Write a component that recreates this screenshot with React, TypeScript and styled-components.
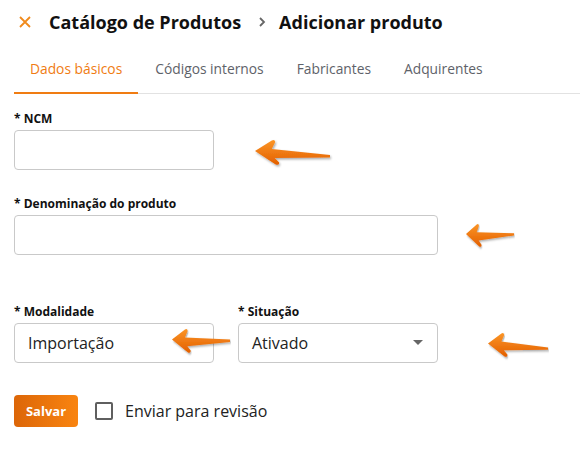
import * as React from 'react'
import styled, {createGlobalStyle} from 'styled-components'

const Global = createGlobalStyle`
  body {
    margin: 0;
    background: #fff;
    font-family: 'Open Sans', 'Noto Sans', sans-serif;
    color: #1a1a1a;
  }
`

const Page = styled.div`
  position: relative;
  width: 580px;
  height: 471px;
  overflow: hidden;
`

const Header = styled.header`
  display: flex;
  align-items: center;
  height: 44px;
  padding: 0 0 0 17px;
`

const Close = styled.span`
  width: 16px;
  height: 16px;
  display: flex;
  margin-right: 16px;
`

const Title = styled.h1`
  margin: 0;
  font-size: 18px;
  font-weight: 700;
  color: #111;
`

const Crumb = styled.span`
  display: flex;
  margin: 0 13px 0 17px;
`

const Tabs = styled.nav`
  display: flex;
  gap: 1px;
  margin-left: 14px;
  border-bottom: 1px solid #e2e2e2;
  height: 49px;
`

const Tab = styled.div<{$active?: boolean}>`
  display: flex;
  align-items: center;
  padding: 0 16px;
  font-size: 13.8px;
  color: ${p => (p.$active ? '#f07c12' : '#5e6269')};
  border-bottom: 2px solid ${p => (p.$active ? '#f07c12' : 'transparent')};
  margin-bottom: -1px;
`

const Form = styled.div`
  padding: 16px 14px 0;
  display: flex;
  flex-direction: column;
`

const Field = styled.div<{$width: number; $mt?: number}>`
  display: flex;
  flex-direction: column;
  width: ${p => p.$width}px;
  margin-top: ${p => p.$mt || 0}px;
`

const Label = styled.label`
  font-size: 12px;
  font-weight: 700;
  color: #111;
  height: 20px;
  line-height: 18px;
`

const Input = styled.div`
  box-sizing: border-box;
  height: 40px;
  border: 1px solid #c9c9c9;
  border-radius: 4px;
  display: flex;
  align-items: center;
  justify-content: space-between;
  padding: 0 14px 0 13px;
  font-size: 16px;
  color: #222;
`

const Row = styled.div<{$mt: number}>`
  display: flex;
  gap: 24px;
  margin-top: ${p => p.$mt}px;
`

const Actions = styled.div`
  display: flex;
  align-items: center;
  margin-top: 32px;
  gap: 17px;
`

const Save = styled.button`
  width: 64px;
  height: 32px;
  border: none;
  border-radius: 4px;
  background: linear-gradient(90deg, #dc6608, #f98410);
  color: #fff;
  font-family: inherit;
  font-size: 13px;
  font-weight: 700;
`

const Check = styled.label`
  display: flex;
  align-items: center;
  gap: 12px;
  font-size: 16px;
  color: #222;
`

const Box = styled.span`
  box-sizing: border-box;
  width: 18px;
  height: 18px;
  border: 2px solid #5f5f5f;
  border-radius: 2px;
`

const Arrow = styled.svg<{$x: number; $y: number}>`
  position: absolute;
  left: ${p => p.$x}px;
  top: ${p => p.$y}px;
  overflow: visible;
`

const Pointer: React.FC<{x: number; y: number; w: number; h: number; tilt: number}> = ({x, y, w, h, tilt}) => {
  const id = `g${x}${y}`
  return (
    <Arrow $x={x} $y={y} width={w} height={h} viewBox="0 0 76 26" preserveAspectRatio="none">
      <defs>
        <linearGradient id={id} x1="0" y1="0" x2="0" y2="1">
          <stop offset="0" stopColor="#fb9526" />
          <stop offset="1" stopColor="#e35f00" />
        </linearGradient>
        <filter id={id + 's'} x="-20%" y="-30%" width="140%" height="170%">
          <feDropShadow dx="1" dy="1.5" stdDeviation="1" floodColor="#000" floodOpacity="0.35" />
        </filter>
      </defs>
      <path
        d={`M0 12 L17 1.5 Q20 0 20.5 3 L17 10 L76 ${15 + tilt} L76 ${17.5 + tilt} L20 19 L24.5 23.5 Q25 26.5 21 25.5 Z`}
        fill={`url(#${id})`}
        filter={`url(#${id}s)`}
      />
    </Arrow>
  )
}

export default function App() {
  return (
    <Page>
      <Global />
      <Header>
        <Close>
          <svg width="16" height="16" viewBox="0 0 16 16">
            <path d="M3 3 L13 13 M13 3 L3 13" stroke="#f08a1c" strokeWidth="1.8" />
          </svg>
        </Close>
        <Title>Catálogo de Produtos</Title>
        <Crumb>
          <svg width="8" height="12" viewBox="0 0 8 12">
            <path d="M2 2 L6 6 L2 10" stroke="#666" strokeWidth="1.8" fill="none" />
          </svg>
        </Crumb>
        <Title>Adicionar produto</Title>
      </Header>
      <Tabs>
        <Tab $active>Dados básicos</Tab>
        <Tab>Códigos internos</Tab>
        <Tab>Fabricantes</Tab>
        <Tab>Adquirentes</Tab>
      </Tabs>
      <Form>
        <Field $width={200}>
          <Label>* NCM</Label>
          <Input />
        </Field>
        <Field $width={424} $mt={25}>
          <Label>* Denominação do produto</Label>
          <Input />
        </Field>
        <Row $mt={48}>
          <Field $width={200}>
            <Label>* Modalidade</Label>
            <Input>Importação</Input>
          </Field>
          <Field $width={200}>
            <Label>* Situação</Label>
            <Input>
              Ativado
              <svg width="10" height="6" viewBox="0 0 10 6">
                <path d="M0 0 L10 0 L5 5 Z" fill="#666" />
              </svg>
            </Input>
          </Field>
        </Row>
        <Actions>
          <Save>Salvar</Save>
          <Check>
            <Box />
            Enviar para revisão
          </Check>
        </Actions>
      </Form>
      <Pointer x={255} y={139} w={75} h={26} tilt={1} />
      <Pointer x={466} y={223} w={48} h={24} tilt={-4} />
      <Pointer x={172} y={328} w={58} h={25} tilt={-3} />
      <Pointer x={488} y={332} w={60} h={25} tilt={1} />
    </Page>
  )
}
